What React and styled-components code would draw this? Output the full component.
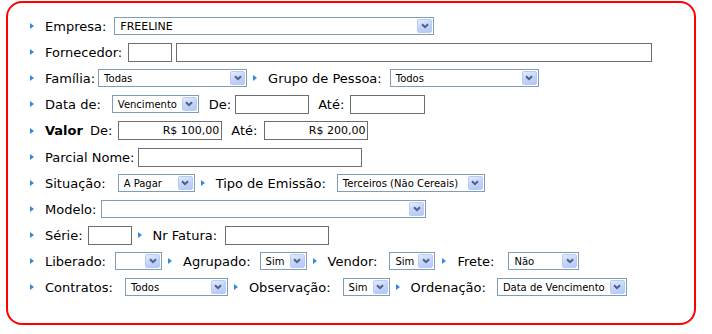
import styled, { createGlobalStyle } from 'styled-components';

const GlobalStyle = createGlobalStyle`
	body {
		margin: 0;
		background: #fff;
		font-family: 'DejaVu Sans', Verdana, sans-serif;
	}
`;

const Panel = styled.div`
	box-sizing: border-box;
	width: 690px;
	margin: 1px 0 0 6px;
	border: 2px solid #ff0000;
	border-radius: 16px;
	padding: 10px 0 23px 22px;
	background: #fff;
`;

const Row = styled.div`
	display: flex;
	align-items: center;
	height: ${(p) => p.$h || 26}px;
`;

const Bullet = styled.span`
	display: inline-block;
	flex: none;
	width: 0;
	height: 0;
	margin: 0 11px 0 ${(p) => p.$ml || 0}px;
	border-top: 3.5px solid transparent;
	border-bottom: 3.5px solid transparent;
	border-left: 4px solid #2f8ae0;
`;

const Label = styled.span`
	flex: none;
	font-size: 13px;
	color: #000;
	white-space: nowrap;
	margin-left: ${(p) => p.$ml || 0}px;
	font-weight: ${(p) => (p.$bold ? 700 : 400)};
`;

const TextBox = styled.div`
	flex: none;
	box-sizing: border-box;
	width: ${(p) => p.$w}px;
	height: 19px;
	margin-left: ${(p) => p.$ml || 0}px;
	border: 1px solid #6e6e6e;
	background: #fff;
	font-size: 11px;
	line-height: 17px;
	text-align: right;
	padding-right: 2px;
	color: #000;
	white-space: nowrap;
`;

const SelectBox = styled.div`
	flex: none;
	display: flex;
	align-items: center;
	box-sizing: border-box;
	width: ${(p) => p.$w}px;
	height: 18px;
	margin-left: ${(p) => p.$ml || 0}px;
	border: 1px solid #7f9db9;
	background: #fff;
	padding: 1px;
`;

const SelectText = styled.span`
	flex: 1;
	min-width: 0;
	padding-left: 4px;
	font-size: ${(p) => p.$fs || 10}px;
	color: #000;
	white-space: nowrap;
	overflow: hidden;
`;

const ArrowButton = styled.span`
	flex: none;
	display: flex;
	align-items: center;
	justify-content: center;
	box-sizing: border-box;
	width: 15px;
	height: 14px;
	border: 1px solid #b7cbf5;
	border-radius: 2px;
	background: linear-gradient(160deg, #e6eefd 0%, #c6d6fb 45%, #b4c8f4 100%);
`;

const Select = ({ w, ml, fs, children }) => (
	<SelectBox $w={w} $ml={ml}>
		<SelectText $fs={fs}>{children}</SelectText>
		<ArrowButton>
			<svg width="8" height="6" viewBox="0 0 8 6">
				<path d="M1 1.2 L4 4.2 L7 1.2" fill="none" stroke="#4d6185" strokeWidth="2" />
			</svg>
		</ArrowButton>
	</SelectBox>
);

const App = () => {
	return (
		<>
			<GlobalStyle />
			<Panel>
				<Row>
					<Bullet />
					<Label>Empresa:</Label>
					<Select w={320} ml={8} fs={11}>
						FREELINE
					</Select>
				</Row>
				<Row>
					<Bullet />
					<Label>Fornecedor:</Label>
					<TextBox $w={44} $ml={6} />
					<TextBox $w={476} $ml={4} />
				</Row>
				<Row>
					<Bullet />
					<Label>Família:</Label>
					<Select w={149} ml={3}>
						Todas
					</Select>
					<Bullet $ml={6} />
					<Label>Grupo de Pessoa:</Label>
					<Select w={149} ml={8}>
						Todos
					</Select>
				</Row>
				<Row>
					<Bullet />
					<Label>Data de:</Label>
					<Select w={87} ml={11}>
						Vencimento
					</Select>
					<Label $ml={10}>De:</Label>
					<TextBox $w={74} $ml={4} />
					<Label $ml={9}>Até:</Label>
					<TextBox $w={75} $ml={6} />
				</Row>
				<Row $h={27}>
					<Bullet />
					<Label $bold>Valor</Label>
					<Label $ml={7}>De:</Label>
					<TextBox $w={104} $ml={6}>
						R$ 100,00
					</TextBox>
					<Label $ml={9}>Até:</Label>
					<TextBox $w={104} $ml={7}>
						R$ 200,00
					</TextBox>
				</Row>
				<Row>
					<Bullet />
					<Label>Parcial Nome:</Label>
					<TextBox $w={224} $ml={4} />
				</Row>
				<Row>
					<Bullet />
					<Label>Situação:</Label>
					<Select w={77} ml={12}>
						A Pagar
					</Select>
					<Bullet $ml={6} />
					<Label>Tipo de Emissão:</Label>
					<Select w={148} ml={11}>
						Terceiros (Não Cereais)
					</Select>
				</Row>
				<Row>
					<Bullet />
					<Label>Modelo:</Label>
					<Select w={325} ml={5} />
				</Row>
				<Row>
					<Bullet />
					<Label>Série:</Label>
					<TextBox $w={44} $ml={5} />
					<Bullet $ml={6} />
					<Label>Nr Fatura:</Label>
					<TextBox $w={104} $ml={8} />
				</Row>
				<Row>
					<Bullet />
					<Label>Liberado:</Label>
					<Select w={47} ml={9} />
					<Bullet $ml={6} />
					<Label>Agrupado:</Label>
					<Select w={47} ml={9}>
						Sim
					</Select>
					<Bullet $ml={6} />
					<Label>Vendor:</Label>
					<Select w={46} ml={12}>
						Sim
					</Select>
					<Bullet $ml={7} />
					<Label>Frete:</Label>
					<Select w={71} ml={14}>
						Não
					</Select>
				</Row>
				<Row>
					<Bullet />
					<Label>Contratos:</Label>
					<Select w={103} ml={12}>
						Todos
					</Select>
					<Bullet $ml={6} />
					<Label>Observação:</Label>
					<Select w={47} ml={12}>
						Sim
					</Select>
					<Bullet $ml={6} />
					<Label>Ordenação:</Label>
					<Select w={130} ml={11}>
						Data de Vencimento
					</Select>
				</Row>
			</Panel>
		</>
	);
};

export default App;
